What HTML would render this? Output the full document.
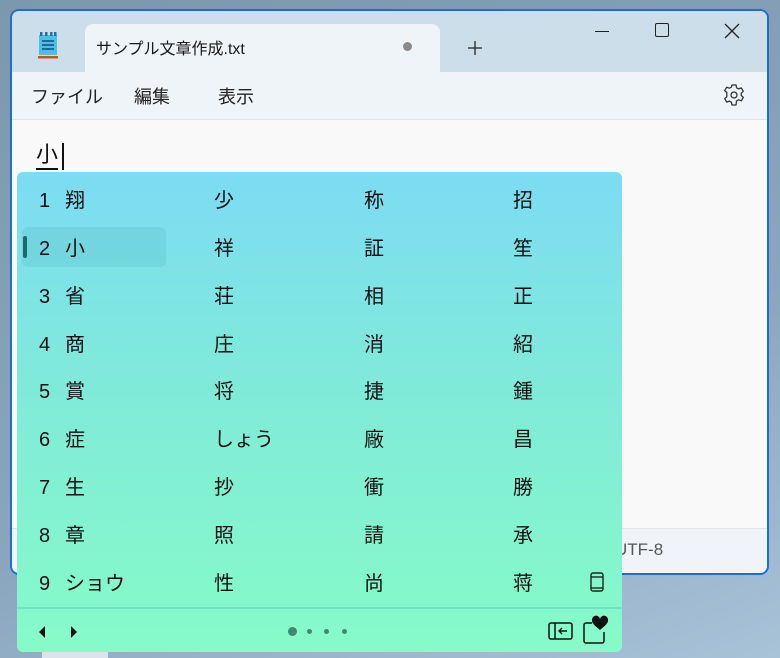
<!DOCTYPE html>
<html><head><meta charset="utf-8"><style>
*{margin:0;padding:0;box-sizing:border-box}
body{width:780px;height:658px;overflow:hidden;position:relative;font-family:"Liberation Sans","Noto Sans CJK JP",sans-serif;background:linear-gradient(160deg,#7d97ad 0%,#8aa5bd 60%,#a8c2d8 100%)}
.abs{position:absolute}
.win{left:10px;top:9px;width:759px;height:566px;border:2px solid #1a6fd0;border-radius:9px;overflow:hidden;background:#f9f9f9}
.title{left:0;top:0;width:100%;height:61px;background:#cddeeb}
.tab{left:73px;top:13px;width:355px;height:48px;background:#eff4f8;border-radius:8px 8px 0 0}
.menu{left:0;top:61px;width:100%;height:48px;background:#eff4f8;border-bottom:1px solid #dde3e8}
.status{left:0;top:517px;width:100%;height:49px;background:#f0f4f8;border-top:1px solid #e0e4e8}
.t{font-size:18px;color:#222;white-space:nowrap}
.panel{left:17px;top:172px;width:605px;height:480px;border-radius:6px;background:linear-gradient(180deg,#7cdcf3 0%,#80ead9 45%,#86fbc8 100%);overflow:hidden}
.c{position:absolute;font-size:20px;color:#111;white-space:nowrap;line-height:24px;margin-top:2px}
</style></head><body>
<div class="abs" style="left:42px;top:650px;width:66px;height:8px;background:#dde3ea"></div>
<div class="abs win">
 <div class="abs title"></div>
 <svg class="abs" style="left:25px;top:20px" width="22" height="30" viewBox="0 0 22 30">
  <rect x="2" y="4" width="18" height="20" fill="#4bbfe6"/>
  <rect x="3" y="1" width="2.5" height="4" fill="#2070a8"/><rect x="8" y="1" width="2.5" height="4" fill="#2070a8"/><rect x="13" y="1" width="2.5" height="4" fill="#2070a8"/><rect x="17" y="1" width="2.5" height="4" fill="#2070a8"/>
  <rect x="5" y="9" width="12" height="2" fill="#1c6a98"/><rect x="5" y="13" width="12" height="2" fill="#1c6a98"/><rect x="5" y="17" width="12" height="2" fill="#1c6a98"/>
  <rect x="1" y="25" width="20" height="2.5" fill="#c8551f"/>
 </svg>
 <div class="abs tab"></div>
 <div class="abs t" style="left:84px;top:24px;font-size:16px;color:#1a1a1a">サンプル文章作成.txt</div>
 <div class="abs" style="left:391px;top:31px;width:9px;height:9px;border-radius:50%;background:#8a8a8a"></div>
 <svg class="abs" style="left:455px;top:29px" width="16" height="16"><path d="M8 1V15M1 8H15" stroke="#222" stroke-width="1.3"/></svg>
 <div class="abs" style="left:583px;top:20px;width:14px;height:1.3px;background:#222"></div>
 <div class="abs" style="left:643px;top:12px;width:14px;height:14px;border:1.3px solid #222;border-radius:2px"></div>
 <svg class="abs" style="left:712px;top:12px" width="16" height="16"><path d="M1 1L15 15M15 1L1 15" stroke="#222" stroke-width="1.3"/></svg>
 <div class="abs menu"></div>
 <div class="abs t" style="left:19px;top:72px">ファイル</div>
 <div class="abs t" style="left:122px;top:72px">編集</div>
 <div class="abs t" style="left:206px;top:72px">表示</div>
 <svg class="abs" style="left:710px;top:72px" width="24" height="24" viewBox="0 0 24 24"><path d="M10 2h4l.6 2.8 2 1.1 2.7-1 2 3.4-2.1 1.9v2.3l2.1 1.9-2 3.4-2.7-1-2 1.1L14 22h-4l-.6-2.8-2-1.1-2.7 1-2-3.4 2.1-1.9V9.5L2.7 7.6l2-3.4 2.7 1 2-1.1z" fill="none" stroke="#333" stroke-width="1.3" stroke-linejoin="round"/><circle cx="12" cy="12" r="3" fill="none" stroke="#333" stroke-width="1.3"/></svg>
 <div class="abs" style="left:24px;top:131px;font-size:22px;color:#111;border-bottom:2px solid #111;line-height:26px">小</div>
 <div class="abs" style="left:50px;top:132px;width:1.5px;height:27px;background:#111"></div>
 <div class="abs status"></div>
 <div class="abs t" style="left:603px;top:529px;font-size:17px;color:#555">UTF-8</div>
</div>
<div class="abs panel">
 <div class="abs" style="left:5px;top:55px;width:144px;height:40px;border-radius:6px;background:rgba(90,190,200,0.3)"></div>
 <div class="abs" style="left:6px;top:64px;width:4px;height:22px;border-radius:2px;background:#1e6a6a"></div>
 <div class="abs" style="left:0;top:435px;width:605px;height:2px;background:rgba(100,210,190,0.6)"></div>
 <div class="c" style="left:22px;top:15px">1</div><div class="c" style="left:48px;top:15px">翔</div><div class="c" style="left:197px;top:15px">少</div><div class="c" style="left:347px;top:15px">称</div><div class="c" style="left:496px;top:15px">招</div>
 <div class="c" style="left:22px;top:63px">2</div><div class="c" style="left:48px;top:63px">小</div><div class="c" style="left:197px;top:63px">祥</div><div class="c" style="left:347px;top:63px">証</div><div class="c" style="left:496px;top:63px">笙</div>
 <div class="c" style="left:22px;top:111px">3</div><div class="c" style="left:48px;top:111px">省</div><div class="c" style="left:197px;top:111px">荘</div><div class="c" style="left:347px;top:111px">相</div><div class="c" style="left:496px;top:111px">正</div>
 <div class="c" style="left:22px;top:159px">4</div><div class="c" style="left:48px;top:159px">商</div><div class="c" style="left:197px;top:159px">庄</div><div class="c" style="left:347px;top:159px">消</div><div class="c" style="left:496px;top:159px">紹</div>
 <div class="c" style="left:22px;top:206px">5</div><div class="c" style="left:48px;top:206px">賞</div><div class="c" style="left:197px;top:206px">将</div><div class="c" style="left:347px;top:206px">捷</div><div class="c" style="left:496px;top:206px">鍾</div>
 <div class="c" style="left:22px;top:254px">6</div><div class="c" style="left:48px;top:254px">症</div><div class="c" style="left:197px;top:254px">しょう</div><div class="c" style="left:347px;top:254px">廠</div><div class="c" style="left:496px;top:254px">昌</div>
 <div class="c" style="left:22px;top:302px">7</div><div class="c" style="left:48px;top:302px">生</div><div class="c" style="left:197px;top:302px">抄</div><div class="c" style="left:347px;top:302px">衝</div><div class="c" style="left:496px;top:302px">勝</div>
 <div class="c" style="left:22px;top:350px">8</div><div class="c" style="left:48px;top:350px">章</div><div class="c" style="left:197px;top:350px">照</div><div class="c" style="left:347px;top:350px">請</div><div class="c" style="left:496px;top:350px">承</div>
 <div class="c" style="left:22px;top:398px">9</div><div class="c" style="left:48px;top:398px">ショウ</div><div class="c" style="left:197px;top:398px">性</div><div class="c" style="left:347px;top:398px">尚</div><div class="c" style="left:496px;top:398px">蒋</div>
 <svg class="abs" style="left:572px;top:400px" width="16" height="20" viewBox="0 0 16 20"><rect x="2" y="1" width="12" height="18" rx="2" fill="none" stroke="#222" stroke-width="1.4"/><line x1="2" y1="5" x2="14" y2="5" stroke="#222" stroke-width="1.4"/><line x1="2" y1="16" x2="14" y2="16" stroke="#222" stroke-width="1.4"/></svg>
 <svg class="abs" style="left:18px;top:452px" width="52" height="16"><path d="M10 2L4 8L10 14Z" fill="#111"/><path d="M36 2L42 8L36 14Z" fill="#111"/></svg>
 <div class="abs" style="left:271px;top:455px;width:9px;height:9px;border-radius:50%;background:#3f8a6e"></div>
 <div class="abs" style="left:290px;top:457px;width:5px;height:5px;border-radius:50%;background:#3f8a6e"></div>
 <div class="abs" style="left:307px;top:457px;width:5px;height:5px;border-radius:50%;background:#3f8a6e"></div>
 <div class="abs" style="left:325px;top:457px;width:5px;height:5px;border-radius:50%;background:#3f8a6e"></div>
 <svg class="abs" style="left:531px;top:448px" width="26" height="22"><rect x="1" y="3" width="23" height="16" rx="2" fill="none" stroke="#111" stroke-width="1.5"/><line x1="7" y1="3" x2="7" y2="19" stroke="#111" stroke-width="1.5"/><path d="M19 11H11M14 8L11 11L14 14" fill="none" stroke="#111" stroke-width="1.4"/></svg>
 <svg class="abs" style="left:565px;top:443px" width="28" height="30"><path d="M10 8H4a2 2 0 0 0-2 2v16a2 2 0 0 0 2 2h16a2 2 0 0 0 2-2V17" fill="none" stroke="#111" stroke-width="1.5"/><path d="M18 15C12 10 10 8 10 5.5a3 3 0 0 1 8-1.5a3 3 0 0 1 8 1.5C26 8 24 10 18 15Z" fill="#111"/></svg>
</div>
</body></html>
